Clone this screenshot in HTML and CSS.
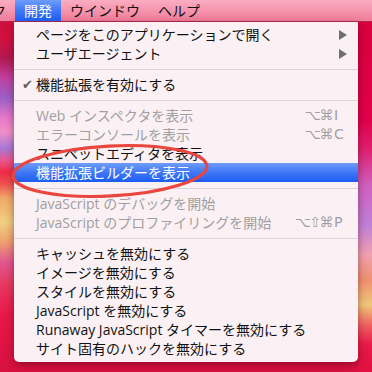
FILE: index.html
```html
<!DOCTYPE html>
<html lang="ja">
<head>
<meta charset="utf-8">
<link rel="stylesheet" href="styles.css">
</head>
<body>
<div class="screen">
  <div class="menubar">
    <span class="mb-item mb-cut">ク</span>
    <span class="mb-item mb-active">開発</span>
    <span class="mb-item">ウインドウ</span>
    <span class="mb-item">ヘルプ</span>
  </div>
  <div class="menu">
    <div class="row"><span class="mark"></span><span class="label">ページをこのアプリケーションで開く</span><span class="arrow"></span></div>
    <div class="row"><span class="mark"></span><span class="label">ユーザエージェント</span><span class="arrow"></span></div>
    <div class="sep"></div>
    <div class="row"><span class="mark">✔</span><span class="label">機能拡張を有効にする</span></div>
    <div class="sep"></div>
    <div class="row off"><span class="mark"></span><span class="label">Web インスペクタを表示</span><span class="keys"><span class="mods">⌥⌘</span><span class="key">I</span></span></div>
    <div class="row off"><span class="mark"></span><span class="label">エラーコンソールを表示</span><span class="keys"><span class="mods">⌥⌘</span><span class="key">C</span></span></div>
    <div class="row"><span class="mark"></span><span class="label">スニペットエディタを表示</span></div>
    <div class="row hl"><span class="mark"></span><span class="label">機能拡張ビルダーを表示</span></div>
    <div class="sep"></div>
    <div class="row off"><span class="mark"></span><span class="label">JavaScript のデバッグを開始</span></div>
    <div class="row off"><span class="mark"></span><span class="label">JavaScript のプロファイリングを開始</span><span class="keys"><span class="mods">⌥⇧⌘</span><span class="key">P</span></span></div>
    <div class="sep"></div>
    <div class="row"><span class="mark"></span><span class="label">キャッシュを無効にする</span></div>
    <div class="row"><span class="mark"></span><span class="label">イメージを無効にする</span></div>
    <div class="row"><span class="mark"></span><span class="label">スタイルを無効にする</span></div>
    <div class="row"><span class="mark"></span><span class="label">JavaScript を無効にする</span></div>
    <div class="row"><span class="mark"></span><span class="label">Runaway JavaScript タイマーを無効にする</span></div>
    <div class="row"><span class="mark"></span><span class="label">サイト固有のハックを無効にする</span></div>
  </div>
  <svg class="ring" width="372" height="372" viewBox="0 0 372 372">
    <ellipse cx="110" cy="171" rx="97" ry="25" transform="rotate(-3 110 171)" fill="none" stroke="#e8463e" stroke-width="3.2"/>
  </svg>
</div>
</body>
</html>
```

FILE: styles.css
```css
html, body {
  margin: 0;
  padding: 0;
}

body {
  font-family: "Open Sans", "Noto Sans CJK JP", sans-serif;
  font-size: 14px;
}

.screen {
  position: relative;
  width: 372px;
  height: 372px;
  overflow: hidden;
  background:
    linear-gradient(180deg, #c8103a 0px, #d21040 40px, #b01850 58px, #c040a0 78px, #9a60c8 98px, #e878c8 118px, #f090c8 132px, #a878d8 148px, #e85890 160px, #ee2c48 172px, #f05050 184px, #f0a868 198px, #f0d080 222px, #f0a070 242px, #e05890 262px, #e83860 285px, #e81848 315px, #d81040 372px) left top / 14px 100% no-repeat,
    linear-gradient(180deg, #d8003a 0px, #e0004a 120px, #e02070 150px, #d060c0 185px, #c080d8 225px, #f0a0b0 255px, #f09070 280px, #f0c878 305px, #f06060 325px, #e81848 345px, #e01040 372px) right top / 14px 100% no-repeat,
    #dc1042;
}

.menubar {
  display: flex;
  height: 21px;
  border-bottom: 1px solid #b02850;
  background: linear-gradient(180deg, #faadc2 0%, #f592ab 55%, #f07c9a 100%);
  color: #111;
  line-height: 21px;
}

.mb-item {
  padding: 0 9px;
  white-space: nowrap;
}

.mb-cut {
  margin-left: -17px;
}

.mb-active {
  color: #fff;
  background: linear-gradient(180deg, #6e9cf9 0%, #3f78f6 50%, #1c5ef3 100%);
}

.menu {
  margin-left: 14px;
  width: 344px;
  padding: 3px 0 4px;
  background: #fbf1f4;
  border-radius: 0 0 5px 5px;
  box-shadow: 0 3px 9px rgba(60, 0, 20, 0.45);
  color: #111;
}

.row {
  display: flex;
  align-items: center;
  height: 19px;
  line-height: 19px;
  padding: 0 11px 0 8px;
  white-space: nowrap;
}

.mark {
  width: 14px;
  flex: none;
  color: #5e5e5e;
  font-family: "DejaVu Sans", sans-serif;
  font-size: 13px;
}

.label {
  flex: 1;
}

.off {
  color: #a0a0a0;
}

.hl {
  color: #fff;
  background: linear-gradient(180deg, #6e9cf9 0%, #3f78f6 50%, #1b5cf2 100%);
}

.arrow {
  width: 0;
  height: 0;
  border-left: 8px solid #6e6e6e;
  border-top: 5px solid transparent;
  border-bottom: 5px solid transparent;
}

.keys {
  display: flex;
  font-family: "DejaVu Sans", sans-serif;
}

.mods {
  letter-spacing: -1.5px;
  padding-right: 1px;
}

.key {
  width: 14px;
  padding-left: 1px;
  box-sizing: border-box;
}

.sep {
  height: 12px;
  display: flex;
  align-items: center;
}

.sep::before {
  content: "";
  display: block;
  width: 100%;
  height: 1px;
  background: #ddd6d9;
}

.ring {
  position: absolute;
  left: 0;
  top: 0;
  pointer-events: none;
}
```
